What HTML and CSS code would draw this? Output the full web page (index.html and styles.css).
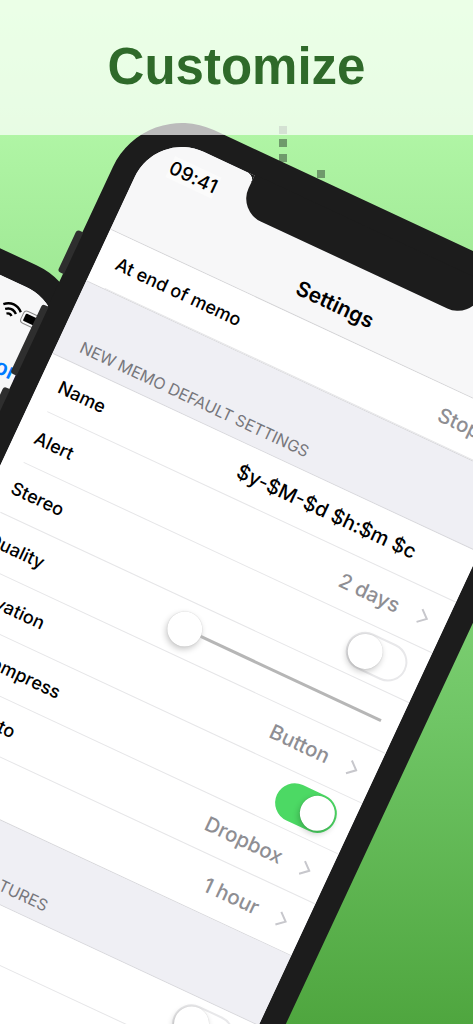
FILE: index.html
```html
<!DOCTYPE html>
<html lang="en">
<head>
<meta charset="utf-8">
<title>Customize</title>
<link rel="stylesheet" href="styles.css">
</head>
<body>
<main class="stage">
  <span class="dot dot-a"></span>
  <span class="dot dot-b"></span>
  <span class="dot dot-c"></span>
  <span class="dot dot-d"></span>

  <section class="phone phone-back">
    <div class="screen">
      <div class="nav">
        <div class="status status-right">
          <svg class="wifi" viewBox="0 0 24 18" aria-hidden="true">
            <path d="M1.500 6.500C8 .5 16 .5 22.500 6.500" />
            <path d="M5.500 10.500c4-3.400 9-3.400 13 0" />
            <path d="M9 14.500c2-1.700 4-1.700 6 0" />
          </svg>
          <span class="battery"><span class="battery-fill"></span></span>
        </div>
        <div class="nav-action">Button</div>
      </div>
    </div>
    <span class="notch"></span>
  </section>

  <section class="phone phone-front">
    <span class="side-btn side-silent"></span>
    <span class="side-btn side-up"></span>
    <span class="side-btn side-down"></span>
    <div class="screen">
      <div class="nav">
        <div class="status"><span class="time">09:41</span></div>
        <div class="nav-title">Settings</div>
      </div>
      <div class="group">
        <div class="row">
          <div class="row-inner">
            <span class="label">At end of memo</span>
            <span class="value">Stop</span>
            <svg class="chev" viewBox="0 0 11 18" aria-hidden="true"><path d="M1.500 2 9.500 9l-8 7" /></svg>
          </div>
        </div>
      </div>
      <div class="section-head">NEW MEMO DEFAULT SETTINGS</div>
      <div class="group">
        <div class="row"><div class="row-inner"><span class="label">Name</span><span class="value value-dark">$y-$M-$d $h:$m $c</span></div></div>
        <div class="row"><div class="row-inner"><span class="label">Alert</span><span class="value">2 days</span><svg class="chev" viewBox="0 0 11 18" aria-hidden="true"><path d="M1.500 2 9.500 9l-8 7" /></svg></div></div>
        <div class="row"><div class="row-inner"><span class="label">Stereo</span><span class="toggle"><span class="knob"></span></span></div></div>
        <div class="row"><div class="row-inner"><span class="label">Quality</span><span class="slider"><span class="knob"></span><span class="track"></span></span></div></div>
        <div class="row"><div class="row-inner"><span class="label">Activation</span><span class="value">Button</span><svg class="chev" viewBox="0 0 11 18" aria-hidden="true"><path d="M1.500 2 9.500 9l-8 7" /></svg></div></div>
        <div class="row"><div class="row-inner"><span class="label">Auto compress</span><span class="toggle toggle-on"><span class="knob"></span></span></div></div>
        <div class="row"><div class="row-inner"><span class="label">Sync files to</span><span class="value">Dropbox</span><svg class="chev" viewBox="0 0 11 18" aria-hidden="true"><path d="M1.500 2 9.500 9l-8 7" /></svg></div></div>
        <div class="row row-last"><div class="row-inner"><span class="label">Limit</span><span class="value">1 hour</span><svg class="chev" viewBox="0 0 11 18" aria-hidden="true"><path d="M1.500 2 9.500 9l-8 7" /></svg></div></div>
      </div>
      <div class="section-head section-head-2">EXPERIMENTAL FEATURES</div>
      <div class="group">
        <div class="row"><div class="row-inner"><span class="label">Widget</span><span class="toggle"><span class="knob"></span></span></div></div>
        <div class="row row-last"><div class="row-inner"><span class="label">Sounds</span></div></div>
      </div>
    </div>
    <span class="notch"></span>
  </section>

  <header class="banner">
    <h1 class="headline">Customize</h1>
  </header>
</main>
</body>
</html>
```

FILE: styles.css
```css
* { box-sizing: border-box; }
html, body { margin: 0; padding: 0; }
body { width: 473px; height: 1024px; overflow: hidden; font-family: Inter, "Liberation Sans", sans-serif; }

.stage {
  position: relative;
  width: 473px;
  height: 1024px;
  overflow: hidden;
  background: linear-gradient(#bcffae 0, #b0f5a5 13%, #70c666 70%, #4fa63f 100%);
}

.banner {
  position: absolute;
  left: 0;
  top: 0;
  width: 473px;
  height: 135px;
  display: flex;
  justify-content: center;
  padding-top: 32px;
  background: rgba(255, 255, 255, 0.7);
}
.headline {
  margin: 0;
  font: 700 51px/70px "Liberation Sans", Arial, sans-serif;
  color: #2f6a2a;
}

.dot { position: absolute; width: 8px; height: 8px; background: #6f9a6b; }
.dot-a { left: 279px; top: 126px; }
.dot-b { left: 279px; top: 139px; }
.dot-c { left: 279px; top: 154px; }
.dot-d { left: 317px; top: 170px; }

.phone {
  position: absolute;
  width: 519px;
  height: 1120px;
  padding: 24px;
  border-radius: 76px;
  background: #1c1c1c;
  transform: rotate(25deg);
  transform-origin: 0 0;
}
.phone-front { left: 145px; top: 98px; }
.phone-back { left: -365px; top: 78px; }

.screen {
  height: 100%;
  border-radius: 52px;
  overflow: hidden;
  background: #efeff4;
  color: #000;
}

.notch {
  position: absolute;
  left: 132px;
  top: 23px;
  width: 256px;
  height: 40px;
  border-radius: 0 0 25px 25px;
  background: #1c1c1c;
}
.notch::before, .notch::after {
  content: "";
  position: absolute;
  top: 1px;
  width: 7px;
  height: 7px;
}
.notch::before { left: -7px; background: radial-gradient(circle at 0 100%, transparent 6.500px, #1c1c1c 7px); }
.notch::after { right: -7px; background: radial-gradient(circle at 100% 100%, transparent 6.500px, #1c1c1c 7px); }

.side-btn {
  position: absolute;
  left: -6px;
  width: 7px;
  border-radius: 3px 0 0 3px;
  background: #2e2e2e;
}
.side-silent { top: 148px; height: 46px; }
.side-up { top: 230px; height: 76px; }
.side-down { top: 321px; height: 76px; }

.nav {
  height: 110px;
  background: #f7f7f8;
  border-bottom: 1px solid #d4d4d6;
}
.status {
  height: 55px;
  display: flex;
  align-items: center;
  padding-left: 28px;
}
.status-right { justify-content: flex-end; gap: 1px; padding: 0 20px 0 0; }
.time { font-size: 19px; font-weight: 500; letter-spacing: 0.2px; background: #fbfbfb; }
.nav-title {
  height: 55px;
  display: flex;
  align-items: center;
  justify-content: center;
  font-size: 21px;
  font-weight: 600;
}
.nav-action {
  height: 55px;
  display: flex;
  align-items: center;
  justify-content: flex-end;
  padding-right: 20px;
  color: #007aff;
  font-size: 22px;
  font-weight: 600;
}

.wifi { width: 22px; height: 17px; fill: none; stroke: #000; stroke-width: 2.600; }
.battery {
  display: block;
  width: 24px;
  height: 14px;
  padding: 2px;
  border: 1px solid #8a8a8a;
  border-radius: 4px;
}
.battery-fill { display: block; height: 100%; background: #000; border-radius: 1px; }

.group {
  background: #fff;
  border-bottom: 1px solid #d8d8dc;
}
.row { height: 55.500px; padding-left: 20px; }
.row-inner {
  height: 100%;
  display: flex;
  align-items: center;
  gap: 21px;
  padding-right: 18px;
  border-bottom: 1px solid #e6e6e8;
  white-space: nowrap;
}
.row-last .row-inner { border-bottom: 0; }
.label { margin-right: auto; font-size: 18px; font-weight: 500; }
.value { font-size: 20.500px; font-weight: 500; color: #8e8e93; }
.value-dark { color: #000; margin-right: 40px; font-size: 20px; }

.chev { width: 11px; height: 18px; fill: none; stroke: #c7c7cc; stroke-width: 2; }

.section-head {
  height: 80px;
  display: flex;
  align-items: flex-end;
  padding: 0 0 8px 23px;
  font-size: 16px;
  color: #77777c;
  background: #efeff4;
  border-bottom: 1px solid #d8d8dc;
}
.section-head-2 { height: 77px; }

.toggle {
  display: block;
  width: 64px;
  height: 39px;
  margin-right: -1px;
  border: 2px solid #e8e8ea;
  border-radius: 20px;
  background: #fff;
}
.toggle-on { display: flex; justify-content: flex-end; border-color: #4cd964; background: #4cd964; }
.knob {
  display: block;
  width: 35px;
  height: 35px;
  border-radius: 50%;
  background: #fff;
  box-shadow: 0 3px 6px rgba(0, 0, 0, 0.22), 0 0 1px rgba(0, 0, 0, 0.2);
}
.slider {
  width: 234px;
  display: flex;
  align-items: center;
}
.slider .knob { flex: none; }
.track { flex: 1; height: 3px; background: #b6b6b6; }
```
